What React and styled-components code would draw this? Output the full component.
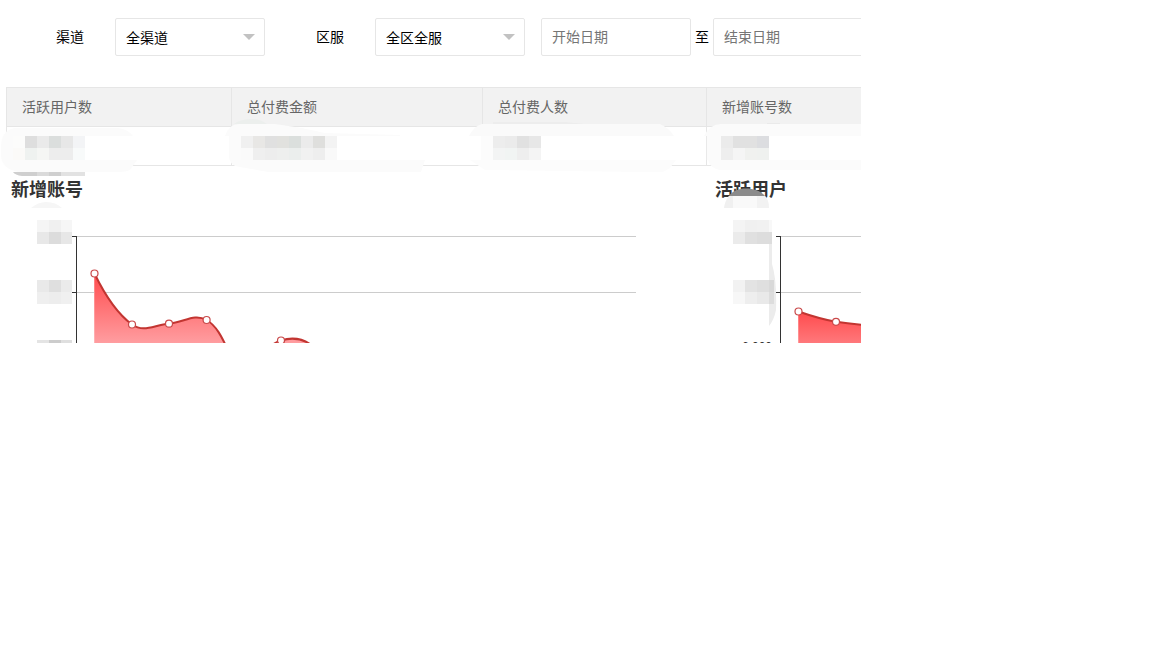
import React from "react";
import styled, { createGlobalStyle } from "styled-components";

const GlobalStyle = createGlobalStyle`
  * { box-sizing: border-box; }
  body {
    margin: 0;
    background: #fff;
    color: #000;
    font: 14px/20px "Noto Sans CJK SC", sans-serif;
  }
`;

const Panel = styled.main`
  max-width: 861px;
  overflow: hidden;
`;

const Toolbar = styled.form`
  display: flex;
  align-items: center;
  padding: 18px 0 0 5px;
`;

const FieldLabel = styled.label`
  flex: 0 0 110px;
  padding: 0 31px 2px 0;
  text-align: right;
`;

const SelectBox = styled.div`
  position: relative;
  flex: 0 0 150px;

  &::after {
    content: "";
    position: absolute;
    right: 10px;
    top: 16px;
    border: 6px solid transparent;
    border-top-color: #c2c2c2;
    pointer-events: none;
  }
`;

const control = `
  display: block;
  width: 150px;
  height: 38px;
  margin: 0;
  padding: 0 10px;
  border: 1px solid #e6e6e6;
  border-radius: 2px;
  background: #fff;
  color: #000;
  font: inherit;
  outline: none;
`;

const Select = styled.select`
  ${control}
  appearance: none;
`;

const DateInput = styled.input`
  ${control}
  flex: none;
  padding-bottom: 2px;
  &::placeholder { color: #757575; opacity: 1; }
`;

const DateRange = styled.div`
  display: flex;
  align-items: center;
  gap: 4px;
  margin-left: 16px;
`;

const Separator = styled.span`
  flex: none;
  padding-bottom: 2px;
`;

const Summary = styled.section`
  position: relative;
  margin: 31px 0 0 6px;
`;

const Table = styled.table`
  width: 925px;
  table-layout: fixed;
  border-collapse: collapse;
  color: #666;
`;

const Col = styled.col`
  width: ${(p) => p.$width}px;
`;

const HeadCell = styled.th`
  height: 39px;
  padding: 0 15px 2px;
  border: 1px solid #e6e6e6;
  background: #f2f2f2;
  font-weight: 400;
  text-align: left;
`;

const Cell = styled.td`
  height: 39px;
  padding: 0 15px;
  border: 1px solid #e6e6e6;
`;

const SummaryMask = styled.svg`
  position: absolute;
  left: -6px;
  top: 28px;
  pointer-events: none;
`;

const Charts = styled.section`
  display: grid;
  grid-template-columns: 704px 704px;
  padding: 11px 0 0 6px;
`;

const Chart = styled.article`
  position: relative;
`;

const ChartTitle = styled.h2`
  margin: 0;
  padding: 0 0 2px 5px;
  color: #333;
  font-size: 18px;
  line-height: 22px;
  font-weight: 700;
`;

const Plot = styled.svg`
  display: block;
`;

const ChartMask = styled.svg`
  position: absolute;
  left: 0;
  top: 0;
  pointer-events: none;
`;

function Blocks({ rows, x, y, widths }) {
  return rows.map((row, r) => {
    let left = x;
    return row.map((fill, c) => {
      const w = widths?.[c] ?? 12;
      const rect = <rect key={`${r}-${c}`} x={left} y={y + r * 12} width={w} height="12" fill={fill} />;
      left += w;
      return rect;
    });
  });
}

function ChartPlot({ id, line, area, points, bottom, children }) {
  return (
    <Plot width="704" height="142" viewBox="0 201 704 142" aria-hidden="true">
      <defs>
        <linearGradient id={id} gradientUnits="userSpaceOnUse" x1="0" x2="0" y1={points[0][1]} y2="343">
          <stop offset="0" stopColor="#ff4b4d" />
          <stop offset="1" stopColor={bottom} />
        </linearGradient>
      </defs>
      <path d={area} fill={`url(#${id})`} />
      <path d="M71 236.5H630M71 292.5H630" stroke="#ccc" />
      <path d={area} fill={`url(#${id})`} />
      <path d="M70.5 236V343M66 236.5H71M66 292.5H71" stroke="#333" />
      <path d={line} fill="none" stroke="#c23531" strokeWidth="2" />
      {points.map(([cx, cy]) => (
        <circle key={cx} cx={cx} cy={cy} r="3.5" fill="#fff" stroke="#c9494a" strokeWidth="1.2" />
      ))}
      {children}
    </Plot>
  );
}

const accountsLine =
  "M88.5 273.5C95 287 109 312 126 324.5C138 333 148 325 163 323.7C178 322.5 188 313 200.6 320C213 327 219 345 226 358C250 372 260 343 275 340.5C286 337 298 338 309 348";
const usersLine = "M88.5 311.5C100 315.500 113 319.500 126 321.8C139 323.8 147 324.5 163 325.5";

export default function App() {
  return (
    <>
      <GlobalStyle />
      <Panel>
        <Toolbar>
          <FieldLabel htmlFor="channel">渠道</FieldLabel>
          <SelectBox>
            <Select id="channel"><option>全渠道</option></Select>
          </SelectBox>
          <FieldLabel htmlFor="server">区服</FieldLabel>
          <SelectBox>
            <Select id="server"><option>全区全服</option></Select>
          </SelectBox>
          <DateRange>
            <DateInput type="text" placeholder="开始日期" aria-label="开始日期" />
            <Separator>至</Separator>
            <DateInput type="text" placeholder="结束日期" aria-label="结束日期" />
          </DateRange>
        </Toolbar>

        <Summary>
          <Table>
            <colgroup>
              <Col $width={225} />
              <Col $width={251} />
              <Col $width={224} />
              <Col $width={225} />
            </colgroup>
            <thead>
              <tr>
                <HeadCell>活跃用户数</HeadCell>
                <HeadCell>总付费金额</HeadCell>
                <HeadCell>总付费人数</HeadCell>
                <HeadCell>新增账号数</HeadCell>
              </tr>
            </thead>
            <tbody>
              <tr><Cell /><Cell /><Cell /><Cell /></tr>
            </tbody>
          </Table>
          <SummaryMask width="861" height="62" viewBox="0 115 861 62" aria-hidden="true">
            <path d="M15 128H118Q128 129 133 136H85V160H137L130 170Q126 172 120 172H18Q1 168 1 155V145Q2 130 15 128Z" fill="#fbfbfb" />
            <path d="M85 136H133V160H85Z" fill="#fff" />
            <Blocks x={13} y={136} rows={[
              ["#fcfcfb", "#dedede", "#eaeaea", "#dbdedd", "#e7e7e7", "#f3f4f6"],
              ["#fbfaf8", "#eff2f0", "#f5f6f4", "#ededed", "#ededed", "#f8fafa"],
            ]} />
            <path d="M13 172H37V176H22Q15 175 13 172Z" fill="#cfcfcf" />
            <path d="M37 172H49V176H37Z" fill="#dadada" />
            <path d="M49 172H61V176H49Z" fill="#cfcfcf" />
            <path d="M61 172H85V176H61Z" fill="#e2e2e2" />

            <path d="M234 124Q240 119 253 119Q260 119 267 124Z" fill="#ecefed" />
            <path d="M225 136Q229 124 239 124H275Q300 127 325 133L400 135V136H337V160H425L421 172H268L240 167Q229 166 229 155V136Z" fill="#fbfbfb" />
            <Blocks x={241} y={136} rows={[
              ["#f0f0f0", "#e8e7e5", "#e0e0e0", "#e1e1de", "#dbdfdd", "#ebebeb", "#dfdfdd", "#f3f3f3"],
              ["#fafafa", "#efefef", "#ededed", "#eeefee", "#ebeeed", "#f1f1f1", "#eeeeee", "#f9f9f9"],
            ]} />

            <path d="M469 136Q474 126 482 124H660Q669 128 674 136Z" fill="#fafafa" />
            <path d="M481 136H541V160H676L670 168L663 172H640L485 170L470 160H481Z" fill="#fcfcfc" />
            <path d="M493 122H565L585 124H493Z" fill="#ededed" />
            <Blocks x={493} y={136} rows={[
              ["#ededed", "#ebebeb", "#e1e1e1", "#e7e7e7"],
              ["#f3f4f4", "#f1f4f3", "#eeeeee", "#f4f4f4"],
            ]} />

            <path d="M704 136Q710 124 721 124H861V136H721V160H861V170H720Q710 168 708 160H706V136Z" fill="#fbfbfb" />
            <path d="M706 136H707V160H706Z" fill="#e9e9e9" />
            <path d="M767 123H780V124H767Z" fill="#eaeaea" />
            <Blocks x={721} y={136} rows={[
              ["#ebebeb", "#e1e1e1", "#e1e1e1", "#dcdde0"],
              ["#eeeeee", "#f5f5f5", "#f0f1ef", "#eff1ef"],
            ]} />
          </SummaryMask>
        </Summary>

        <Charts>
          <Chart>
            <ChartTitle>新增账号</ChartTitle>
            <ChartPlot
              id="accountsFill"
              line={accountsLine}
              area={`${accountsLine}V400H88.5Z`}
              bottom="#ff9da0"
              points={[[88.5, 273.5], [126, 324.5], [163, 323.7], [200.6, 320], [275, 340.5]]}
            />
            <ChartMask width="704" height="166" viewBox="0 177 704 166" aria-hidden="true">
              <path d="M25 208Q32 202 40 202Q50 202 56 208Z" fill="#f6f6f6" />
              <Blocks x={31} y={220} widths={[12, 12, 11]} rows={[
                ["#f5f5f5", "#f0f0f0", "#f6f6f6"],
                ["#e8e8e8", "#dcdcdc", "#e7e7e7"],
              ]} />
              <Blocks x={31} y={280} widths={[12, 12, 11]} rows={[
                ["#e9e9e9", "#dfdfdf", "#ebebeb"],
                ["#efefef", "#ededed", "#f0f0f0"],
              ]} />
              <Blocks x={31} y={340} widths={[12, 12, 11]} rows={[["#e4e4e4", "#cccccc", "#dfdfdf"]]} />
            </ChartMask>
          </Chart>
          <Chart>
            <ChartTitle>活跃用户</ChartTitle>
            <ChartPlot
              id="usersFill"
              line={usersLine}
              area={`${usersLine}V400H88.5Z`}
              bottom="#ff787b"
              points={[[88.5, 311.5], [126, 321.8]]}
            >
              <text x="62" y="351" textAnchor="end" fontFamily="Liberation Sans, sans-serif" fontSize="12" fill="#333">6,000</text>
            </ChartPlot>
            <ChartMask width="704" height="166" viewBox="0 177 704 166" aria-hidden="true">
              <path d="M19 196C25 186 47 186 55 196Z" fill="#8b8b8b" />
              <path d="M14 208Q15 201 19 196H55Q59 200 59 208Z" fill="#f9f9f9" />
              <path d="M14 208Q15 201 19 196H23V208Z" fill="#f0f0f0" />
              <path d="M47 196H55Q59 200 59 208H47Z" fill="#f2f2f2" />
              <path d="M59 236H62V264Q67 280 66 310Q64 320 59 326Z" fill="#ececec" />
              <Blocks x={23} y={220} widths={[12, 12, 12, 3]} rows={[
                ["#f4f4f4", "#f0f0f0", "#f1f1f1", "#f8f8f8"],
                ["#ebebeb", "#e0e0e0", "#dddddd", "#dddddd"],
              ]} />
              <Blocks x={23} y={280} widths={[12, 12, 12, 5]} rows={[
                ["#f2f2f2", "#e3e3e3", "#dfdfdf", "#d9d9d9"],
                ["#f7f7f7", "#eeeeee", "#e9e9e9", "#dddddd"],
              ]} />
            </ChartMask>
          </Chart>
        </Charts>
      </Panel>
    </>
  );
}
